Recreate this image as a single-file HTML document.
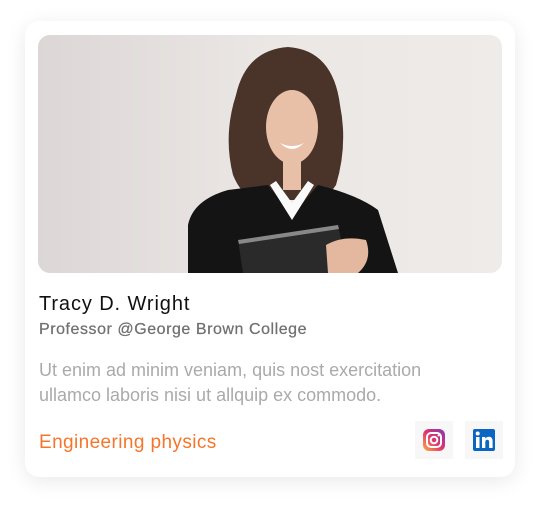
<!DOCTYPE html>
<html><head><style>
*{margin:0;padding:0;box-sizing:border-box}
body{width:540px;height:507px;background:#fff;font-family:"Liberation Sans",sans-serif;position:relative;overflow:hidden}
.card{position:absolute;left:25px;top:21px;width:490px;height:456px;background:#fff;border-radius:14px;box-shadow:0 4px 20px rgba(0,0,0,0.09)}
.img{position:absolute;left:13px;top:14px;width:464px;height:238px;border-radius:12px;overflow:hidden;background:linear-gradient(90deg,#dcd7d6,#ebe7e5 50%,#eeebe9)}
.name{position:absolute;left:14px;top:272px;font-size:20px;color:#111;letter-spacing:0.9px}
.sub{position:absolute;left:14px;top:300px;font-size:16px;color:#707070;letter-spacing:0.55px;-webkit-text-stroke:0.25px #707070}
.desc{position:absolute;left:14px;top:337px;font-size:18px;line-height:25px;color:#aaa}
.tag{position:absolute;left:14px;top:411px;font-size:19px;color:#f6752a;letter-spacing:0.4px}
.ic{position:absolute;top:400px;width:38px;height:38px;background:#f7f7f7}
</style></head><body>
<div class="card">
<div class="img">
<svg width="464" height="238" viewBox="0 0 464 238">
<path d="M195 140 Q185 100 198 60 Q208 15 250 12 Q295 15 302 70 Q310 110 298 150 Q285 170 260 165 L225 165 Q205 165 195 140Z" fill="#4a3328"/>
<ellipse cx="254" cy="92" rx="26" ry="37" fill="#e8c0a8"/>
<path d="M226 62 Q245 35 280 55 Q275 45 255 42 Q232 44 226 62Z" fill="#4a3328"/>
<path d="M242 108 Q254 120 266 108 Q254 114 242 108Z" fill="#fff"/>
<rect x="245" y="125" width="18" height="30" fill="#e8c0a8"/>
<path d="M150 238 L150 190 Q155 165 190 155 L230 150 L254 180 L280 150 Q320 160 340 175 L360 238Z" fill="#141414"/>
<path d="M232 150 L254 185 L276 150 L270 146 L254 168 L238 146Z" fill="#fafafa"/>
<path d="M200 205 L300 190 L310 238 L205 238Z" fill="#2a2a2a"/>
<path d="M200 205 L300 190 L301 194 L201 209Z" fill="#888"/>
<path d="M288 210 Q305 200 328 205 Q335 225 320 238 L290 238Z" fill="#e3b89f"/>
</svg>
</div>
<div class="name">Tracy D. Wright</div>
<div class="sub">Professor @George Brown College</div>
<div class="desc">Ut enim ad minim veniam, quis nost exercitation<br>ullamco laboris nisi ut allquip ex commodo.</div>
<div class="tag">Engineering physics</div>
<div class="ic" style="left:390px">
<svg width="38" height="38" viewBox="0 0 38 38"><defs><linearGradient id="g" x1="0" y1="1" x2="1" y2="0"><stop offset="0" stop-color="#fcb045"/><stop offset=".5" stop-color="#e1306c"/><stop offset="1" stop-color="#833ab4"/></linearGradient></defs>
<rect x="8" y="8" width="22" height="22" rx="6" fill="url(#g)"/>
<rect x="12" y="12" width="14" height="14" rx="4" fill="none" stroke="#fff" stroke-width="2"/>
<circle cx="19" cy="19" r="3.3" fill="none" stroke="#fff" stroke-width="2"/>
<circle cx="23.5" cy="14.5" r="1" fill="#fff"/></svg></div>
<div class="ic" style="left:440px">
<svg width="38" height="38" viewBox="0 0 38 38"><rect x="8" y="8" width="22" height="22" rx="2" fill="#0a66c2"/>
<rect x="11" y="16" width="3.5" height="11" fill="#fff"/><circle cx="12.7" cy="12.5" r="2" fill="#fff"/>
<path d="M17 16h3.3v1.6Q21.5 15.7 24 15.7q3.6 0 3.6 4.5V27h-3.5v-6q0-2.3-1.8-2.3-2 0-2 2.5V27H17Z" fill="#fff"/></svg></div>
</div>
</body></html>
